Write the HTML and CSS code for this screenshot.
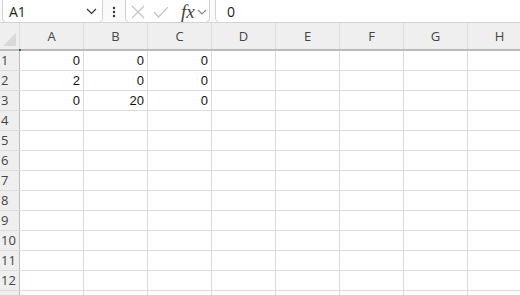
FILE: index.html
```html
<!DOCTYPE html>
<html lang="en">
<head>
  <meta charset="UTF-8" />
  <title>Sheet</title>
  <link rel="stylesheet" href="styles.css">
</head>
<body>

  <div class="toolbar">
    <div class="name-box">
      <span>A1</span>
      <svg class="chevron" width="11" height="7" viewBox="0 0 11 7"><path d="M1 1l4.5 4.5L10 1" fill="none" stroke="#333" stroke-width="1.2"/></svg>
    </div>
    <div class="dots">
      <svg width="4" height="12" viewBox="0 0 4 12"><circle cx="2" cy="2" r="1.2" fill="#333"/><circle cx="2" cy="6" r="1.2" fill="#333"/><circle cx="2" cy="10" r="1.2" fill="#333"/></svg>
    </div>
    <div class="fx-box">
      <svg width="14" height="14" viewBox="0 0 14 14"><path d="M1 1l12 12M13 1L1 13" stroke="#c4c4c4" stroke-width="1.2"/></svg>
      <svg width="16" height="12" viewBox="0 0 16 12"><path d="M1 6l4.5 5L15 1" fill="none" stroke="#c4c4c4" stroke-width="1.2"/></svg>
      <span class="fx">fx</span>
      <svg width="10" height="6" viewBox="0 0 10 6"><path d="M1 1l4 4 4-4" fill="none" stroke="#888" stroke-width="1.1"/></svg>
    </div>
    <div class="formula">0</div>
  </div>

  <div class="sheet">
    <div class="row head">
      <div class="rh corner"><span class="tri"></span><span class="sel"></span></div>
      <div class="ch">A</div><div class="ch">B</div><div class="ch">C</div><div class="ch">D</div>
      <div class="ch">E</div><div class="ch">F</div><div class="ch">G</div><div class="ch">H</div>
    </div>
    <div class="row"><div class="rh">1</div><div class="c">0</div><div class="c">0</div><div class="c">0</div><div class="c"></div><div class="c"></div><div class="c"></div><div class="c"></div><div class="c"></div></div>
    <div class="row"><div class="rh">2</div><div class="c">2</div><div class="c">0</div><div class="c">0</div><div class="c"></div><div class="c"></div><div class="c"></div><div class="c"></div><div class="c"></div></div>
    <div class="row"><div class="rh">3</div><div class="c">0</div><div class="c">20</div><div class="c">0</div><div class="c"></div><div class="c"></div><div class="c"></div><div class="c"></div><div class="c"></div></div>
    <div class="row"><div class="rh">4</div><div class="c"></div><div class="c"></div><div class="c"></div><div class="c"></div><div class="c"></div><div class="c"></div><div class="c"></div><div class="c"></div></div>
    <div class="row"><div class="rh">5</div><div class="c"></div><div class="c"></div><div class="c"></div><div class="c"></div><div class="c"></div><div class="c"></div><div class="c"></div><div class="c"></div></div>
    <div class="row"><div class="rh">6</div><div class="c"></div><div class="c"></div><div class="c"></div><div class="c"></div><div class="c"></div><div class="c"></div><div class="c"></div><div class="c"></div></div>
    <div class="row"><div class="rh">7</div><div class="c"></div><div class="c"></div><div class="c"></div><div class="c"></div><div class="c"></div><div class="c"></div><div class="c"></div><div class="c"></div></div>
    <div class="row"><div class="rh">8</div><div class="c"></div><div class="c"></div><div class="c"></div><div class="c"></div><div class="c"></div><div class="c"></div><div class="c"></div><div class="c"></div></div>
    <div class="row"><div class="rh">9</div><div class="c"></div><div class="c"></div><div class="c"></div><div class="c"></div><div class="c"></div><div class="c"></div><div class="c"></div><div class="c"></div></div>
    <div class="row"><div class="rh">10</div><div class="c"></div><div class="c"></div><div class="c"></div><div class="c"></div><div class="c"></div><div class="c"></div><div class="c"></div><div class="c"></div></div>
    <div class="row"><div class="rh">11</div><div class="c"></div><div class="c"></div><div class="c"></div><div class="c"></div><div class="c"></div><div class="c"></div><div class="c"></div><div class="c"></div></div>
    <div class="row"><div class="rh">12</div><div class="c"></div><div class="c"></div><div class="c"></div><div class="c"></div><div class="c"></div><div class="c"></div><div class="c"></div><div class="c"></div></div>
    <div class="row"><div class="rh"></div><div class="c"></div><div class="c"></div><div class="c"></div><div class="c"></div><div class="c"></div><div class="c"></div><div class="c"></div><div class="c"></div></div>
  </div>

</body>
</html>
```

FILE: styles.css
```css
* { box-sizing: border-box; }
html, body { overflow: hidden; }
body {
  margin: 0;
  font-family: "Open Sans", "Liberation Sans", sans-serif;
  background: #fff;
  color: #222;
}
.toolbar {
  display: flex;
  align-items: flex-end;
  height: 23px;
  padding-left: 2px;
  border-bottom: 1px solid #d6d6d6;
  background: #fafafa;
}
.name-box, .fx-box, .formula {
  display: flex;
  align-items: center;
  height: 28px;
  margin-bottom: -1px;
  padding-top: 5px;
  background: #fff;
  border: 1px solid #d2d2d2;
  border-radius: 5px;
}
.name-box {
  width: 101px;
  padding-left: 6px;
  padding-right: 5px;
  font-size: 14px;
  justify-content: space-between;
}
.dots {
  width: 22px;
  display: flex;
  justify-content: center;
  padding-bottom: 4px;
}
.fx-box {
  width: 85px;
  padding-left: 5px;
  gap: 8px;
}
.fx {
  font-family: "Liberation Serif", serif;
  font-style: italic;
  font-size: 19px;
  color: #444;
  margin-left: 4px;
  margin-right: -6px;
  line-height: 1;
}
.formula {
  flex: 1;
  margin-left: 5px;
  margin-right: -10px;
  padding-left: 11px;
  font-size: 14px;
}
.sheet {
  font-family: "Liberation Sans", sans-serif;
}
.row {
  display: flex;
  height: 20px;
  border-bottom: 1px solid #dcdcdc;
}
.row.head {
  height: 28px;
  border-bottom: 2px solid #bababa;
  background: #efefef;
}
.rh {
  width: 20px;
  flex: none;
  background: #efefef;
  border-right: 1px solid #bababa;
  font-family: "Open Sans", sans-serif;
  font-size: 13px;
  color: #444;
  line-height: 19px;
  padding-left: 1px;
}
.corner {
  position: relative;
  border-right: 1px solid #dcdcdc;
}
.tri {
  position: absolute;
  right: 3px;
  bottom: 3px;
  width: 0;
  height: 0;
  border-left: 13px solid transparent;
  border-bottom: 13px solid #d8d8d8;
}
.sel {
  position: absolute;
  right: -2px;
  bottom: -2px;
  width: 2px;
  height: 2px;
  background: #1e7145;
}
.ch {
  width: 64px;
  flex: none;
  border-right: 1px solid #dcdcdc;
  text-align: center;
  font-family: "Open Sans", sans-serif;
  font-size: 13px;
  color: #444;
  line-height: 27px;
}
.c {
  width: 64px;
  flex: none;
  border-right: 1px solid #dcdcdc;
  text-align: right;
  padding-right: 3px;
  font-size: 13px;
  line-height: 20px;
  color: #111;
}
```
